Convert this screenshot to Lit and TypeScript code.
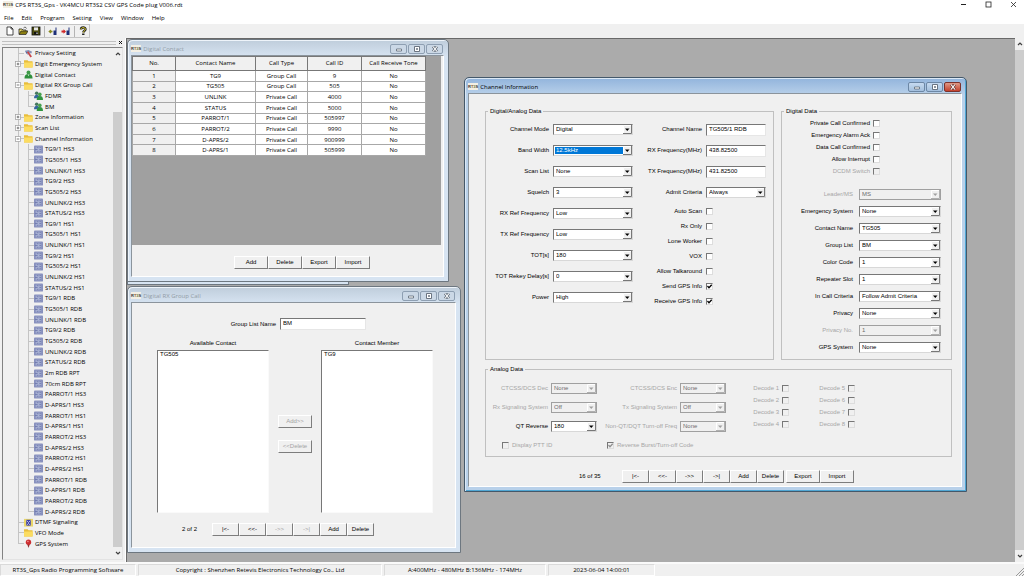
import { LitElement, html, css, svg, nothing } from "lit";
import { customElement, property } from "lit/decorators.js";
import { classMap } from "lit/directives/class-map.js";

type Icon = "tool" | "folder" | "person" | "people" | "chip" | "dtmf" | "gps";
interface Node {
  text: string;
  icon: Icon;
  box?: "+" | "-";
  child?: boolean;
  last?: boolean;
}
interface Field {
  label: string;
  value?: string;
  kind?: "select" | "text" | "check";
  off?: boolean;
  on?: boolean;
  focus?: boolean;
}

const channels = [
  ...["HS3", "HS1", "RDB"].flatMap((s) =>
    ["TG9/1", "TG505/1", "UNLINK/1", "TG9/2", "TG505/2", "UNLINK/2", "STATUS/2"].map((n) => `${n} ${s}`)
  ),
  "2m RDB RPT",
  "70cm RDB RPT",
  "PARROT/1 HS3",
  "D-APRS/1 HS3",
  "PARROT/1 HS1",
  "D-APRS/1 HS1",
  "PARROT/2 HS3",
  "D-APRS/2 HS3",
  "PARROT/2 HS1",
  "D-APRS/2 HS1",
  "PARROT/1 RDB",
  "D-APRS/1 RDB",
  "PARROT/2 RDB",
  "D-APRS/2 RDB",
];

const nodes: Node[] = [
  { text: "Privacy Setting", icon: "tool" },
  { text: "Digit Emergency System", icon: "folder", box: "+" },
  { text: "Digital Contact", icon: "person" },
  { text: "Digital RX Group Call", icon: "folder", box: "-" },
  { text: "FDMR", icon: "people", child: true },
  { text: "BM", icon: "people", child: true, last: true },
  { text: "Zone Information", icon: "folder", box: "+" },
  { text: "Scan List", icon: "folder", box: "+" },
  { text: "Channel Information", icon: "folder", box: "-" },
  ...channels.map((text, i): Node => ({ text, icon: "chip", child: true, last: i === channels.length - 1 })),
  { text: "DTMF Signaling", icon: "dtmf" },
  { text: "VFO Mode", icon: "folder" },
  { text: "GPS System", icon: "gps", last: true },
];

const contacts = [
  ["TG9", "Group Call", "9"],
  ["TG505", "Group Call", "505"],
  ["UNLINK", "Private Call", "4000"],
  ["STATUS", "Private Call", "5000"],
  ["PARROT/1", "Private Call", "505997"],
  ["PARROT/2", "Private Call", "9990"],
  ["D-APRS/2", "Private Call", "900999"],
  ["D-APRS/1", "Private Call", "505999"],
];

const radioFields: Field[] = [
  { label: "Channel Mode", value: "Digital" },
  { label: "Band Width", value: "12.5kHz", focus: true },
  { label: "Scan List", value: "None" },
  { label: "Squelch", value: "3" },
  { label: "RX Ref Frequency", value: "Low" },
  { label: "TX Ref Frequency", value: "Low" },
  { label: "TOT[s]", value: "180" },
  { label: "TOT Rekey Delay[s]", value: "0" },
  { label: "Power", value: "High" },
];
const nameFields: Field[] = [
  { label: "Channel Name", value: "TG505/1 RDB", kind: "text" },
  { label: "RX Frequency(MHz)", value: "438.82500", kind: "text" },
  { label: "TX Frequency(MHz)", value: "431.82500", kind: "text" },
  { label: "Admit Criteria", value: "Always" },
];
const radioChecks: Field[] = [
  { label: "Auto Scan" },
  { label: "Rx Only" },
  { label: "Lone Worker" },
  { label: "VOX" },
  { label: "Allow Talkaround" },
  { label: "Send GPS Info", on: true },
  { label: "Receive GPS Info", on: true },
];
const digitalChecks: Field[] = [
  { label: "Private Call Confirmed" },
  { label: "Emergency Alarm Ack" },
  { label: "Data Call Confirmed" },
  { label: "Allow Interrupt" },
  { label: "DCDM Switch", off: true },
];
const digitalFields: Field[] = [
  { label: "Leader/MS", value: "MS", off: true },
  { label: "Emergency System", value: "None" },
  { label: "Contact Name", value: "TG505" },
  { label: "Group List", value: "BM" },
  { label: "Color Code", value: "1" },
  { label: "Repeater Slot", value: "1" },
  { label: "In Call Criteria", value: "Follow Admit Criteria" },
  { label: "Privacy", value: "None" },
  { label: "Privacy No.", value: "1", off: true },
  { label: "GPS System", value: "None" },
];
const analogFields: Field[] = [
  { label: "CTCSS/DCS Dec", value: "None", off: true },
  { label: "CTCSS/DCS Enc", value: "None", off: true },
  { label: "Rx Signaling System", value: "Off", off: true },
  { label: "Tx Signaling System", value: "Off", off: true },
  { label: "QT Reverse", value: "180" },
  { label: "Non-QT/DQT Turn-off Freq", value: "None", off: true },
];

const icons: Record<Icon, unknown> = {
  tool: svg`<path d="M1 2L5 1L9 3L8 5L5 4L3 5Z" fill="#8794b8"/><path d="M4 3L8 9" stroke="#c8484a" stroke-width="2"/><path d="M2 3L4 6" stroke="#4b5f95"/>`,
  folder: svg`<path d="M0 1.500H4L5 2.500H9.500V9.500H0Z" fill="#e8bd3c"/><path d="M0 4H10L9.500 9.500H0Z" fill="#fbdc62"/>`,
  person: svg`<circle cx="5" cy="2.800" r="2.200" fill="#3f9a48"/><path d="M.5 9.500C.5 6 2 4.500 5 4.500S9.500 6 9.500 9.500Z" fill="#2f8f3c"/><path d="M4 5L5 7L6 5" fill="#d8f0d8"/>`,
  people: svg`<circle cx="3" cy="2.500" r="2" fill="#46785f"/><path d="M0 8C0 5 1.500 4.500 3 4.500S6 5 6 8Z" fill="#3565a0"/><circle cx="6.500" cy="3.800" r="2" fill="#46a04e"/><path d="M3 10C3 6.500 4.500 5.500 6.500 5.500S10 6.500 10 10Z" fill="#2f9440"/>`,
  chip: svg`<rect x="0" y=".5" width="10" height="9" rx="1" fill="#8790bd"/><rect x="2" y="2" width="6" height="6" fill="#a9b2d4"/><path d="M1 5H4M3 3H5M6 3H8M6 5H8M3 7H5M6 7H8" stroke="#6f79ae"/>`,
  dtmf: svg`<rect x="0" y="1" width="10" height="8.500" fill="#e9d668"/><rect x="2.500" y="2" width="5" height="6.500" fill="#3b3fa8"/><path d="M3 3L5 5L7 3M3 8L5 6L7 8" stroke="#fff" fill="none" stroke-width=".7"/>`,
  gps: svg`<path d="M5 10L3.500 5.500H6.500Z" fill="#903030"/><circle cx="5" cy="3.500" r="3" fill="#cc2f31"/><circle cx="4.300" cy="2.800" r=".9" fill="#f09090"/>`,
};

const arrow = (dir: "up" | "down") => html`<svg class="arrow" viewBox="0 0 8 8" width="8" height="8">
  <path d=${dir === "up" ? "M2 5L4 3L6 5" : "M2 3L4 5L6 3"} fill="none" stroke="#404040" stroke-width="1.2" />
</svg>`;

const logo = html`<span class="logo" aria-hidden="true"><b>R</b><i>T</i><u>3</u><b>S</b></span>`;

const shared = css`
  * {
    box-sizing: border-box;
  }
  svg {
    display: block;
    flex: none;
  }
  .logo {
    display: inline-flex;
    align-items: center;
    height: 7px;
    background: #f3efe4;
    font: 700 4px/7px "Liberation Sans", sans-serif;
    color: #333;
  }
  .logo b,
  .logo i,
  .logo u {
    font-style: normal;
    text-decoration: none;
  }
  .logo i {
    color: #8a5a3a;
  }
  .logo u {
    color: #6a7a3a;
  }
`;

@customElement("mdi-window")
class MdiWindow extends LitElement {
  @property() heading = "";
  @property({ type: Boolean, reflect: true }) active = false;

  static styles = [
    shared,
    css`
      :host {
        display: flex;
        flex-direction: column;
        box-sizing: border-box;
        padding: 0 4px 4px 3px;
        border: 1px solid #6d7780;
        border-radius: 5px 5px 0 0;
        background: linear-gradient(#bfcddb, #d7e4f2 17px);
        box-shadow: inset 1px 1px 0 #eef4fa;
      }
      :host([active]) {
        border-color: #44586a;
        background: linear-gradient(#92b4dc, #b9d1ea 17px);
        box-shadow: inset 1px 1px 0 #dbe8f5, inset -1px -1px 0 #4fa6d3;
      }
      header {
        display: flex;
        align-items: center;
        flex: none;
        height: 15px;
        gap: 2px;
        padding: 2px 1px 0 0;
        font: 6px/8px "Open Sans", sans-serif;
        color: #929ca6;
      }
      :host([active]) header {
        color: #000;
      }
      h2 {
        flex: 1;
        margin: 0;
        font: inherit;
        white-space: nowrap;
      }
      button {
        display: grid;
        place-items: center;
        width: 17px;
        height: 10px;
        margin-left: 1px;
        padding: 0;
        border: 1px solid #8e9fb2;
        border-radius: 2px;
        background: #cbd8e6;
        color: #5c6774;
      }
      h2 ~ button {
        margin-left: -1px;
      }
      :host([active]) button {
        border-color: #6c87a5;
        background: linear-gradient(#c6daf0, #a3bfdd);
      }
      :host([active]) .close {
        border-color: #7c322c;
        background: linear-gradient(#e09a88, #c4402c);
        color: #6b3b38;
      }
      .client {
        flex: 1;
        display: flex;
        flex-direction: column;
        min-height: 0;
        background: #f0f0f0;
        border: 1px solid #8b949c;
        border-right-color: #fff;
        border-bottom-color: #fff;
      }
    `,
  ];

  render() {
    return html`
      <header>
        ${logo}
        <h2>${this.heading}</h2>
        <button aria-label="Minimize">
          <svg viewBox="0 0 8 6" width="8" height="6"><path d="M1.500 3H6.500V5H1.500Z" fill="#fff" stroke="currentColor" stroke-width=".8" /></svg>
        </button>
        <button aria-label="Maximize">
          <svg viewBox="0 0 8 6" width="8" height="6"><path d="M1.500 .5H6.500V5.500H1.500ZM3.500 2.500H4.500V3.500H3.500Z" fill="#fff" stroke="currentColor" stroke-width=".9" /></svg>
        </button>
        <button class="close" aria-label="Close">
          <svg viewBox="0 0 8 6" width="8" height="6">
            <path d="M2 .5L6 5.500M6 .5L2 5.500" stroke="currentColor" stroke-width="2.600" />
            <path d="M2 .5L6 5.500M6 .5L2 5.500" stroke="#fff" stroke-width="1.200" />
          </svg>
        </button>
      </header>
      <div class="client"><slot></slot></div>
    `;
  }
}

@customElement("app-root")
class AppRoot extends LitElement {
  static styles = [
    shared,
    css`
      :host {
        display: flex;
        flex-direction: column;
        height: 100vh;
        overflow: hidden;
        background: #f0f0f0;
        color: #000;
        font: 6px/8px "Open Sans", sans-serif;
        white-space: nowrap;
      }
      .titlebar {
        display: flex;
        align-items: center;
        flex: none;
        height: 11px;
        padding: 0 3px 2px;
        gap: 2px;
        background: #fff;
      }
      .titlebar h1 {
        flex: 1;
        margin: 0;
        font: inherit;
      }
      .caption {
        display: flex;
        gap: 10px;
      }
      .caption button,
      .menu button,
      .tools button,
      .grip button {
        padding: 0;
        border: 0;
        background: none;
        font: inherit;
        color: inherit;
      }
      .caption button {
        display: grid;
        place-items: center;
        width: 15px;
      }
      .menu {
        display: flex;
        flex: none;
        gap: 8px;
        height: 13px;
        padding-left: 4px;
        background: #fff;
      }
      .tools {
        display: flex;
        align-items: center;
        flex: none;
        align-self: flex-start;
        height: 14px;
        width: 90px;
        padding-left: 5px;
        gap: 3px;
        border: 1px solid #c4c4c4;
        border-left: 0;
      }
      .tools i {
        width: 1px;
        height: 11px;
        background: #b4b4b4;
      }
      .body {
        display: flex;
        flex: 1;
        min-height: 0;
      }
      .side {
        display: flex;
        flex-direction: column;
        width: 126px;
        padding: 0 2px 2px;
        border-right: 1px solid #fff;
      }
      .grip {
        display: flex;
        align-items: center;
        flex: none;
        height: 9px;
        gap: 2px;
      }
      .grip span {
        flex: 1;
        height: 4px;
        border: 1px solid #c0c0c0;
        border-width: 1px 0;
      }
      .treebox {
        display: flex;
        flex: 1;
        min-height: 0;
        border: 1px solid #828282;
        border-right-color: #e3e3e3;
        border-bottom-color: #e3e3e3;
      }
      .tree {
        display: flex;
        flex: 1;
        flex-direction: column;
        margin: 0;
        padding: 0 0 10px 11px;
        list-style: none;
      }
      .tree li {
        display: flex;
        flex: 1;
        min-height: 0;
        align-items: center;
      }
      .guide {
        display: flex;
        align-items: center;
        width: 10px;
        align-self: stretch;
        background: linear-gradient(#c4c4c4, #c4c4c4) 4px 0 / 1px 100% no-repeat;
      }
      .guide.branch {
        background: linear-gradient(#c4c4c4, #c4c4c4) 4px 0 / 1px 100% no-repeat,
          linear-gradient(#c4c4c4, #c4c4c4) 4px 50% / 6px 1px no-repeat;
      }
      .guide.branch.last {
        background-size: 1px 50%, 6px 1px;
      }
      .guide svg {
        margin-left: 1px;
      }
      .tree a {
        display: flex;
        align-items: center;
        gap: 2px;
        color: inherit;
        text-decoration: none;
      }
      .scroll {
        display: flex;
        flex-direction: column;
        align-items: center;
        flex: none;
        width: 9px;
        background: #f0f0f0;
      }
      .scroll .arrow {
        margin: 2px 0;
      }
      .thumb {
        width: 100%;
        flex: 1;
        background: #cdcdcd;
      }
      .side .thumb {
        margin-top: 52px;
      }
      .desk {
        position: relative;
        flex: 1;
        overflow: hidden;
        background: #ababab;
        border: 1px solid #696969;
        border-width: 1px 0 0 1px;
      }
      .desk mdi-window,
      .behind {
        position: absolute;
      }
      .behind {
        left: 0;
        top: 200px;
        width: 222px;
        height: 46px;
        border: 1px solid #6d7780;
        background: #d7e4f2;
      }
      .w-contact {
        left: 0;
        top: 0;
        width: 322px;
        height: 243px;
      }
      .w-group {
        left: 0;
        top: 247px;
        width: 334px;
        height: 267px;
      }
      .w-channel {
        left: 337px;
        top: 38px;
        width: 503px;
        height: 415px;
      }
      .status {
        display: flex;
        flex: none;
        height: 14px;
        gap: 2px;
        border-top: 2px solid #fafafa;
        text-align: center;
      }
      .status span {
        padding-top: 1px;
        border: 1px solid #dadada;
        border-right-color: #fff;
        border-bottom-color: #fff;
      }
      .s1 {
        width: 136px;
      }
      .s2 {
        width: 244px;
      }
      .s3 {
        width: 162px;
      }
      .s4 {
        width: 107px;
      }
      .s5 {
        flex: 1;
        display: flex;
        justify-content: flex-end;
      }

      /* controls inside the child windows */
      .form,
      .btn,
      .form select,
      .form input {
        font: 6px/7px "Liberation Sans", Arial, sans-serif;
        color: #000;
      }
      .btn {
        height: 13px;
        width: 27px;
        padding: 0;
        border: 1px solid #fff;
        border-right-color: #7d7d7d;
        border-bottom-color: #7d7d7d;
        background: #f0f0f0;
      }
      .btn.wide {
        width: 34px;
      }
      .btn:disabled {
        color: #a3a3a3;
      }
      .grid {
        flex: none;
        height: 189px;
        margin-right: 2px;
        background: #a0a0a0;
      }
      table {
        width: 294px;
        height: 100px;
        table-layout: fixed;
        border-collapse: collapse;
        text-align: center;
        background: #fff;
      }
      th,
      td {
        padding: 0;
        border: 1px solid #a8a8a8;
        font-weight: 400;
        line-height: 8px;
      }
      thead th {
        height: 14px;
        padding-bottom: 1px;
        border-color: #777;
      }
      th {
        background: #f0f0f0;
      }
      .c1 {
        width: 43px;
      }
      .c2 {
        width: 80px;
      }
      .c3 {
        width: 52px;
      }
      .c4 {
        width: 54px;
      }
      .row {
        display: flex;
      }
      .contact-actions {
        padding: 11px 0 0 102px;
      }

      .sel {
        display: grid;
        height: 11px;
        background: #fff;
        border: 1px solid #777;
        border-right-color: #d8d8d8;
        border-bottom-color: #d8d8d8;
      }
      .sel select,
      .sel svg {
        grid-area: 1 / 1;
      }
      .sel select {
        appearance: none;
        width: 100%;
        height: 9px;
        padding: 0 9px 1px 2px;
        border: 0;
        border-radius: 0;
        background: none;
        opacity: 1;
        outline: 0;
      }
      .sel svg {
        justify-self: end;
        pointer-events: none;
      }
      .sel.focus {
        background: #0078d7;
        box-shadow: inset 0 0 0 1px #fff;
      }
      .sel.focus select {
        color: #fff;
      }
      .sel.off {
        background: #f0f0f0;
        border-color: #a0a0a0;
      }
      .sel.off select {
        color: #6d6d6d;
      }
      .form input.text {
        width: 100%;
        height: 12px;
        padding: 0 1px 2px 2px;
        border: 1px solid #777;
        border-right-color: #e6e6e6;
        border-bottom-color: #e6e6e6;
        border-radius: 0;
        background: #fff;
      }
      .check {
        appearance: none;
        width: 7px;
        height: 7px;
        margin: 0;
        border: 1px solid #777;
        border-right-color: #ddd;
        border-bottom-color: #ddd;
        background: #fff;
      }
      .tick {
        display: grid;
        width: 7px;
      }
      .tick > * {
        grid-area: 1 / 1;
      }
      .form .tick .check {
        font-size: 6px;
      }
      .tick .check:disabled {
        background: #f0f0f0;
      }
      .dim {
        color: #a6a6a6;
      }
      fieldset {
        min-width: 0;
        margin: 0;
        padding: 0;
        border: 1px solid #c0c0c0;
      }
      legend {
        margin-left: 2px;
        padding: 0 2px;
        line-height: 7px;
      }
      .field {
        display: grid;
        align-items: center;
        text-align: right;
      }
      .top {
        display: grid;
        grid-template-columns: 1fr 171px;
        gap: 7px;
      }
      .channel {
        padding: 14px 9px 0 16px;
      }
      .radio {
        height: 252px;
      }
      .radio .cols {
        display: grid;
        grid-template-columns: 147px 133px;
        padding-top: 4px;
      }
      .radio .field {
        height: 21px;
        gap: 4px;
        grid-template-columns: 1fr 80px;
      }
      .radio .names .field {
        grid-template-columns: 1fr 60px;
      }
      .radio .checks {
        padding-top: 1px;
      }
      .radio .checks .field {
        height: 15px;
      }
      .digital .checks {
        padding: 2px 0 9px;
      }
      .digital .checks .field {
        height: 12px;
        gap: 3px;
        grid-template-columns: 88px 7px;
      }
      .digital .selects .field {
        height: 17px;
        gap: 6px;
        grid-template-columns: 71px 82px;
      }
      .analog {
        height: 91px;
        margin-top: 6px;
      }
      .analog .cols {
        display: grid;
        grid-template-columns: 240px 63px 66px;
        padding-top: 6px;
      }
      .signal {
        display: grid;
        grid-template-columns: 111px 129px;
      }
      .signal .field {
        height: 19px;
        gap: 3px;
        grid-template-columns: 1fr 46px;
      }
      .decode {
        padding-top: 3px;
      }
      .decode .field {
        height: 12px;
        gap: 3px;
        grid-template-columns: 1fr 7px;
      }
      .lead {
        display: flex;
        align-items: center;
        gap: 3px;
        height: 19px;
        padding-left: 16px;
      }
      .lead + .lead {
        padding-left: 10px;
      }
      .channel .row {
        align-items: center;
        padding: 13px 0 0 94px;
      }
      .count {
        width: 43px;
      }
      .gap {
        margin-left: 2px;
      }

      .group {
        padding: 15px 22px 0 25px;
      }
      .group .name {
        display: grid;
        grid-template-columns: 119px 86px;
        align-items: center;
        gap: 4px;
        text-align: right;
      }
      .lists {
        display: grid;
        grid-template-columns: 112px 1fr 112px;
        padding-top: 10px;
      }
      .lists label {
        display: grid;
        gap: 3px;
        text-align: center;
      }
      .lists select {
        width: 100%;
        height: 163px;
        padding: 0;
        border: 1px solid #777;
        border-right-color: #fafafa;
        border-bottom-color: #fafafa;
        border-radius: 0;
        background: #fff;
        overflow: hidden;
      }
      .move {
        display: flex;
        flex-direction: column;
        align-items: center;
        gap: 12px;
        padding-top: 75px;
      }
      .group .row {
        align-items: center;
        padding: 10px 0 0 25px;
      }
      .group .count {
        width: 30px;
      }
    `,
  ];

  private select(f: Field) {
    const ink = f.off ? "#a0a0a0" : "#000";
    return html`<span class=${classMap({ sel: true, focus: !!f.focus, off: !!f.off })}>
      <select ?disabled=${f.off}><option>${f.value}</option></select>
      <svg viewBox="0 0 9 9" width="9" height="9">
        <path d="M0 0H9V9H0Z" fill="#f0f0f0" />
        <path d="M.5 9V.5H9" stroke="#fff" fill="none" />
        <path d="M0 8.500H8.500V0" stroke=${f.off ? "#b0b0b0" : "#777"} fill="none" />
        <path d="M2 3.500H6.500L4.250 6Z" fill=${ink} />
      </svg>
    </span>`;
  }

  private tick(f: Field) {
    return html`<span class="tick">
      <input class="check" type="checkbox" ?checked=${f.on} ?disabled=${f.off} />
      ${f.on
        ? html`<svg viewBox="0 0 7 7" width="7" height="7"><path d="M1.500 3L3 4.800L5.700 1.800" fill="none" stroke=${f.off ? "#909090" : "#000"} stroke-width="1.300" /></svg>`
        : nothing}
    </span>`;
  }

  private field = (f: Field) => html`<label class=${classMap({ field: true, dim: !!f.off })}>
    <span>${f.label}</span>
    ${f.value === undefined
      ? this.tick(f)
      : f.kind === "text"
        ? html`<input class="text" .value=${f.value} />`
        : this.select(f)}
  </label>`;

  private node = (n: Node) => html`<li>
    ${n.child ? html`<span class="guide"></span>` : nothing}
    <span class=${classMap({ guide: true, branch: true, last: !!n.last })}>
      ${n.box
        ? html`<svg viewBox="0 0 7 7" width="6" height="6">
            <rect x=".5" y=".5" width="6" height="6" fill="#fff" stroke="#a4a4a4" stroke-width=".9" />
            <path d=${n.box === "+" ? "M2 3.500H5M3.500 2V5" : "M2 3.500H5"} stroke="#555" stroke-width=".9" />
          </svg>`
        : nothing}
    </span>
    <a href="#"><svg viewBox="0 0 10 10" width="9" height="9">${icons[n.icon]}</svg>${n.text}</a>
  </li>`;

  render() {
    const nav = ["|<-", "<<-", "->>", "->|"];
    return html`
      <header class="titlebar">
        ${logo}
        <h1>CPS RT3S_Gps - VK4MCU RT3S2 CSV GPS Code plug V006.rdt</h1>
        <div class="caption">
          <button aria-label="Minimize"><svg viewBox="0 0 7 7" width="7" height="7"><path d="M1 3.500H6" stroke="#222" /></svg></button>
          <button aria-label="Restore"><svg viewBox="0 0 7 7" width="7" height="7"><rect x="1" y="1" width="5" height="5" fill="none" stroke="#222" stroke-width=".8" /></svg></button>
          <button aria-label="Close"><svg viewBox="0 0 7 7" width="7" height="7"><path d="M1 1L6 6M6 1L1 6" stroke="#222" stroke-width=".8" /></svg></button>
        </div>
      </header>
      <nav class="menu">
        ${["File", "Edit", "Program", "Setting", "View", "Window", "Help"].map((m) => html`<button>${m}</button>`)}
      </nav>
      <div class="tools">
        <button aria-label="New"><svg viewBox="0 0 10 10" width="10" height="10"><path d="M2 1H6L8 3V9H2ZM6 1V3H8" fill="#fff" stroke="#222" stroke-width=".8" /></svg></button>
        <button aria-label="Open"><svg viewBox="0 0 10 10" width="10" height="10"><path d="M1 8V3H4L5 4H8V5" fill="#f4e36a" stroke="#222" stroke-width=".8" /><path d="M1 8.500L3 5H10L8 8.500Z" fill="#8a7d10" stroke="#222" stroke-width=".7" /><path d="M5.500 2C6.500 .8 8 1 8.500 2.500" fill="none" stroke="#222" stroke-width=".7" /></svg></button>
        <button aria-label="Save"><svg viewBox="0 0 10 10" width="10" height="10"><rect x="1" y="1" width="8" height="8" fill="#4d4d10" stroke="#111" stroke-width=".8" /><rect x="3" y="1.400" width="4" height="3" fill="#e8e8e8" /><rect x="3" y="6" width="4" height="2.600" fill="#111" /><rect x="5.500" y="6.500" width="1" height="1.500" fill="#fff" /></svg></button>
        <i></i>
        <button aria-label="Read"><svg viewBox="0 0 10 10" width="10" height="10"><path d="M4.500 5.500H1.500M3 4L1.300 5.500L3 7" stroke="#8a8a20" stroke-width="1.300" fill="none" /><path d="M5.500 4.500H8.500V9H5.500ZM7.500 1.500H8.500V4.500H7.500Z" fill="#1c2f78" /></svg></button>
        <button aria-label="Write"><svg viewBox="0 0 10 10" width="10" height="10"><path d="M.5 5.500H3.500" stroke="#d02828" stroke-width="2" /><path d="M2.500 3.300L5 5.500L2.500 7.700Z" fill="#d02828" /><path d="M5.500 4.500H8.500V9H5.500ZM7.500 1.500H8.500V4.500H7.500Z" fill="#1c2f78" /></svg></button>
        <i></i>
        <button aria-label="About"><svg viewBox="0 0 10 10" width="10" height="10"><path d="M3 3.500C3 .8 7.500 .8 7.500 3.300C7.500 4.800 5.500 4.800 5.300 6.500M5.300 7.500V9" fill="none" stroke="#222" stroke-width="2.400" /><path d="M3 3.300C3.200 1 7.300 1 7.300 3.300C7.300 4.800 5.500 4.800 5.300 6.500" fill="none" stroke="#e6d62c" stroke-width="1" /></svg></button>
      </div>
      <div class="body">
        <aside class="side">
          <div class="grip">
            <span></span>
            <button aria-label="Close panel"><svg viewBox="0 0 5 5" width="5" height="5"><path d="M1 1L4 4M4 1L1 4" stroke="#111" /></svg></button>
          </div>
          <div class="treebox">
            <ul class="tree">${nodes.map(this.node)}</ul>
            <div class="scroll">${arrow("up")}<div class="thumb"></div>${arrow("down")}</div>
          </div>
        </aside>
        <main class="desk">
          <div class="behind"></div>
          <mdi-window class="w-contact" heading="Digital Contact">
            <div class="grid">
              <table>
                <thead>
                  <tr><th class="c1">No.</th><th class="c2">Contact Name</th><th class="c3">Call Type</th><th class="c4">Call ID</th><th>Call Receive Tone</th></tr>
                </thead>
                <tbody>
                  ${contacts.map((c, i) => html`<tr><th>${i + 1}</th>${c.map((v) => html`<td>${v}</td>`)}<td>No</td></tr>`)}
                </tbody>
              </table>
            </div>
            <div class="row contact-actions">
              ${["Add", "Delete", "Export", "Import"].map((b) => html`<button class="btn wide">${b}</button>`)}
            </div>
          </mdi-window>
          <mdi-window class="w-group" heading="Digital RX Group Call">
            <div class="form group">
              <label class="name"><span>Group List Name</span><input class="text" .value=${"BM"} /></label>
              <div class="lists">
                <label><span>Available Contact</span><select multiple><option>TG505</option></select></label>
                <div class="move">
                  <button class="btn wide" disabled>Add&gt;&gt;</button>
                  <button class="btn wide" disabled>&lt;&lt;Delete</button>
                </div>
                <label><span>Contact Member</span><select multiple><option>TG9</option></select></label>
              </div>
              <div class="row">
                <span class="count">2 of 2</span>
                ${nav.map((b, i) => html`<button class="btn" ?disabled=${i > 1}>${b}</button>`)}
                <button class="btn">Add</button><button class="btn">Delete</button>
              </div>
            </div>
          </mdi-window>
          <mdi-window class="w-channel" heading="Channel Information" active>
            <div class="form channel">
              <div class="top">
                <fieldset class="radio">
                  <legend>Digital/Analog Data</legend>
                  <div class="cols">
                    <div>${radioFields.map(this.field)}</div>
                    <div class="names">
                      ${nameFields.map(this.field)}
                      <div class="checks">${radioChecks.map(this.field)}</div>
                    </div>
                  </div>
                </fieldset>
                <fieldset class="digital">
                  <legend>Digital Data</legend>
                  <div class="checks">${digitalChecks.map(this.field)}</div>
                  <div class="selects">${digitalFields.map(this.field)}</div>
                </fieldset>
              </div>
              <fieldset class="analog">
                <legend>Analog Data</legend>
                <div class="cols">
                  <div class="signal">
                    ${analogFields.map(this.field)}
                    <label class="lead dim">${this.tick({ label: "", off: true })}Display PTT ID</label>
                    <label class="lead dim">${this.tick({ label: "", off: true, on: true })}Reverse Burst/Turn-off Code</label>
                  </div>
                  ${[1, 5].map(
                    (s) => html`<div class="decode">
                      ${[0, 1, 2, 3].map((i) => this.field({ label: `Decode ${s + i}`, off: true }))}
                    </div>`
                  )}
                </div>
              </fieldset>
              <div class="row">
                <span class="count">16 of 35</span>
                ${nav.map((b) => html`<button class="btn">${b}</button>`)}
                <button class="btn">Add</button><button class="btn">Delete</button>
                <button class="btn wide gap">Export</button><button class="btn wide">Import</button>
              </div>
            </div>
          </mdi-window>
        </main>
        <div class="scroll">${arrow("up")}<div class="thumb"></div>${arrow("down")}</div>
      </div>
      <footer class="status">
        <span class="s1">RT3S_Gps Radio Programming Software</span>
        <span class="s2">Copyright : Shenzhen Retevis Electronics Technology Co., Ltd</span>
        <span class="s3">A:400MHz - 480MHz B:136MHz - 174MHz</span>
        <span class="s4">2023-06-04 14:00:01</span>
        <div class="s5">
          <svg viewBox="0 0 10 12" width="10" height="12"><path d="M2 12L10 4M5 12L10 7M8 12L10 10" stroke="#999" /></svg>
        </div>
      </footer>
    `;
  }
}
